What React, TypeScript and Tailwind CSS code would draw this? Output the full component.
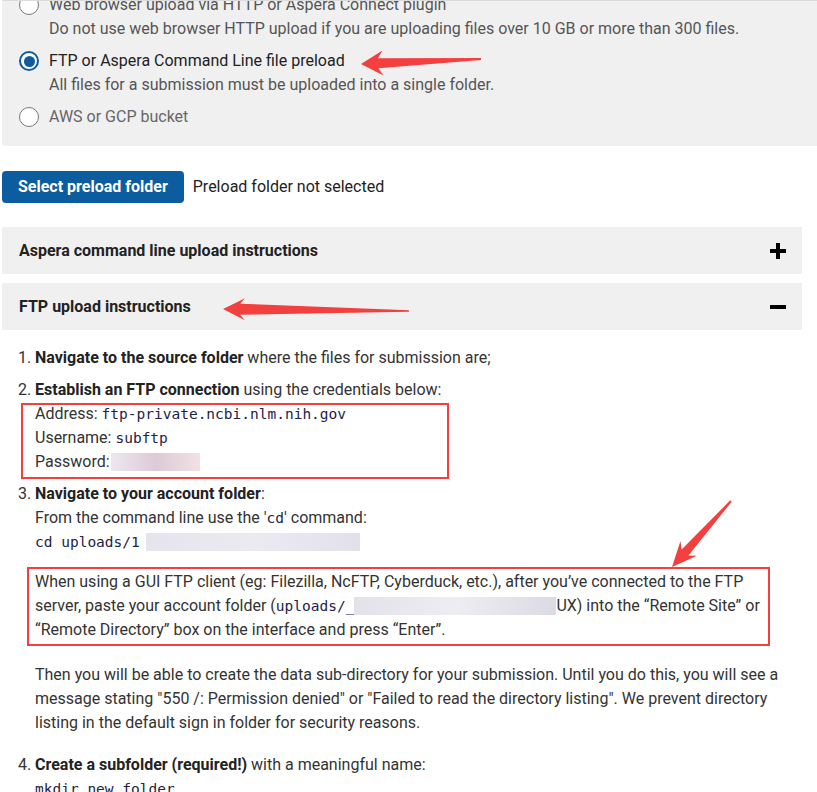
import type { ReactNode } from "react";

type Pt = [number, number];

// red annotation arrow: tapered shaft + barbed head
function arrowPoints(tail: Pt, tip: Pt, headLen: number, headHalf: number, shaftHead: number, shaftTail: number) {
  const dx = tip[0] - tail[0];
  const dy = tip[1] - tail[1];
  const len = Math.hypot(dx, dy);
  const ux = dx / len;
  const uy = dy / len;
  const nx = -uy;
  const ny = ux;
  const bx = tip[0] - ux * headLen * 0.78;
  const by = tip[1] - uy * headLen * 0.78;
  const wx = tip[0] - ux * headLen;
  const wy = tip[1] - uy * headLen;
  const pts: Pt[] = [
    [tail[0] + nx * shaftTail, tail[1] + ny * shaftTail],
    [bx + nx * shaftHead, by + ny * shaftHead],
    [wx + nx * headHalf, wy + ny * headHalf],
    tip,
    [wx - nx * headHalf, wy - ny * headHalf],
    [bx - nx * shaftHead, by - ny * shaftHead],
    [tail[0] - nx * shaftTail, tail[1] - ny * shaftTail],
  ];
  return pts.map((p) => `${p[0].toFixed(1)},${p[1].toFixed(1)}`).join(" ");
}

const ARROWS = [
  arrowPoints([481, 59], [361, 64], 22, 12.5, 5, 1),
  arrowPoints([409, 311], [223, 309], 22, 11, 5.5, 0.8),
  arrowPoints([731, 501], [672, 567], 25, 11, 4.5, 1),
];

function Radio({ checked }: { checked?: boolean }) {
  if (checked) {
    return (
      <span className="mt-[2px] flex h-5 w-5 shrink-0 items-center justify-center rounded-full border-[2.5px] border-[#0c5d9f] bg-white">
        <span className="h-[11px] w-[11px] rounded-full bg-[#0c5d9f]" />
      </span>
    );
  }
  return <span className="mt-[2px] h-5 w-5 shrink-0 rounded-full border-[1.5px] border-[#7a7a7a] bg-white" />;
}

function Option({ label, hint, checked, labelColor, className = "" }: { label: string; hint?: string; checked?: boolean; labelColor: string; className?: string }) {
  return (
    <div className={`flex gap-[10px] ${className}`}>
      <Radio checked={checked} />
      <div>
        <div className={labelColor}>{label}</div>
        {hint && <div className="text-[#555]">{hint}</div>}
      </div>
    </div>
  );
}

function Accordion({ title, open }: { title: string; open?: boolean }) {
  return (
    <div className="flex h-[47px] items-center justify-between bg-[#f0f0f0] pl-[17px] pr-4">
      <span className="text-[16px] font-bold text-[#222]">{title}</span>
      <svg width="16" height="16" viewBox="0 0 16 16">
        <rect x="0" y="6" width="16" height="4" fill="#000" />
        {!open && <rect x="6" y="0" width="4" height="16" fill="#000" />}
      </svg>
    </div>
  );
}

function Step({ n, children, className = "" }: { n: number; children: ReactNode; className?: string }) {
  return (
    <li className={`flex ${className}`}>
      <span className="w-[17px] shrink-0">{n}.</span>
      <div className="min-w-0 flex-1">{children}</div>
    </li>
  );
}

const mono = "font-['DejaVu_Sans_Mono',monospace] text-[14.5px] text-[#22224a]";

function Blur({ w, className = "" }: { w: string; className?: string }) {
  return <span className={`inline-block h-[18px] align-[-4px] blur-[0.6px] ${w} ${className}`} />;
}

export default function App() {
  return (
    <div className="relative h-[792px] w-[817px] overflow-hidden bg-white font-['Roboto',sans-serif] text-[16px] leading-6 text-[#333]">
      <div className="pl-[2px]">
        {/* upload method panel */}
        <section className="flex flex-col gap-2 overflow-hidden rounded-bl-[4px] border-t border-[#dcdcdc] bg-[#f0f0f0] pb-[17px] pl-[17px]">
          <Option
            className="-mt-[8px]"
            label="Web browser upload via HTTP or Aspera Connect plugin"
            hint="Do not use web browser HTTP upload if you are uploading files over 10 GB or more than 300 files."
            labelColor="text-[#555]"
          />
          <Option
            checked
            label="FTP or Aspera Command Line file preload"
            hint="All files for a submission must be uploaded into a single folder."
            labelColor="text-[#222]"
          />
          <Option label="AWS or GCP bucket" labelColor="text-[#666]" />
        </section>

        <div className="mt-[25px] flex items-center gap-[9px]">
          <button className="h-8 rounded-[4px] bg-[#0c5d9f] px-4 text-[16px] font-bold text-white">
            Select preload folder
          </button>
          <span className="text-[#222]">Preload folder not selected</span>
        </div>

        <div className="mt-6 flex w-[800px] flex-col gap-[9px]">
          <Accordion title="Aspera command line upload instructions" />
          <Accordion title="FTP upload instructions" open />
        </div>

        <ol className="mt-4 flex flex-col gap-2 pl-4">
          <Step n={1}>
            <b className="font-bold text-[#222]">Navigate to the source folder</b> where the files for submission are;
          </Step>
          <Step n={2}>
            <b className="font-bold text-[#222]">Establish an FTP connection</b> using the credentials below:
            <div className="relative">
              <div>
                Address: <span className={mono}>ftp-private.ncbi.nlm.nih.gov</span>
              </div>
              <div>
                Username: <span className={mono}>subftp</span>
              </div>
              <div>
                Password:
                <Blur w="w-[89px]" className="ml-[1px] bg-linear-to-r from-[#ece8ef] via-[#dccbd6] to-[#f3e1e5]" />
              </div>
              <div className="absolute -left-[14px] top-[1px] h-[76px] w-[428px] border-2 border-[#f43f3f]" />
            </div>
          </Step>
          <Step n={3}>
            <b className="font-bold text-[#222]">Navigate to your account folder</b>:
            <div>
              From the command line use the '<span className={mono}>cd</span>' command:
            </div>
            <div className={mono}>
              cd uploads/1
              <Blur w="w-[214px]" className="ml-[6px] bg-linear-to-r from-[#e6e4ec] via-[#eceaf1] to-[#e2e0ea]" />
            </div>
            <div className="relative mt-4">
              When using a GUI FTP client (eg: Filezilla, NcFTP, Cyberduck, etc.), after you’ve connected to the FTP
              <br />
              server, paste your account folder (<span className={mono}>uploads/_</span>
              <Blur w="w-[202px]" className="bg-linear-to-r from-[#e3e2ea] via-[#eeedf2] to-[#dcdbe4]" />
              UX) into the “Remote Site” or
              <br />
              “Remote Directory” box on the interface and press “Enter”.
              <div className="absolute -left-[8px] -top-[3px] h-[79px] w-[743px] border-2 border-[#f43f3f]" />
            </div>
            <p className="mt-[21px]">
              Then you will be able to create the data sub-directory for your submission. Until you do this, you will see a
              <br />
              message stating "550 /: Permission denied" or "Failed to read the directory listing". We prevent directory
              <br />
              listing in the default sign in folder for security reasons.
            </p>
          </Step>
          <Step n={4} className="mt-[10px]">
            <b className="font-bold text-[#222]">Create a subfolder (required!)</b> with a meaningful name:
            <div className={mono}>mkdir new_folder</div>
          </Step>
        </ol>
      </div>

      {/* annotation arrows */}
      <svg className="pointer-events-none absolute left-0 top-0" width="817" height="792">
        {ARROWS.map((p, i) => (
          <polygon key={i} points={p} fill="#f43f3f" />
        ))}
      </svg>
    </div>
  );
}
